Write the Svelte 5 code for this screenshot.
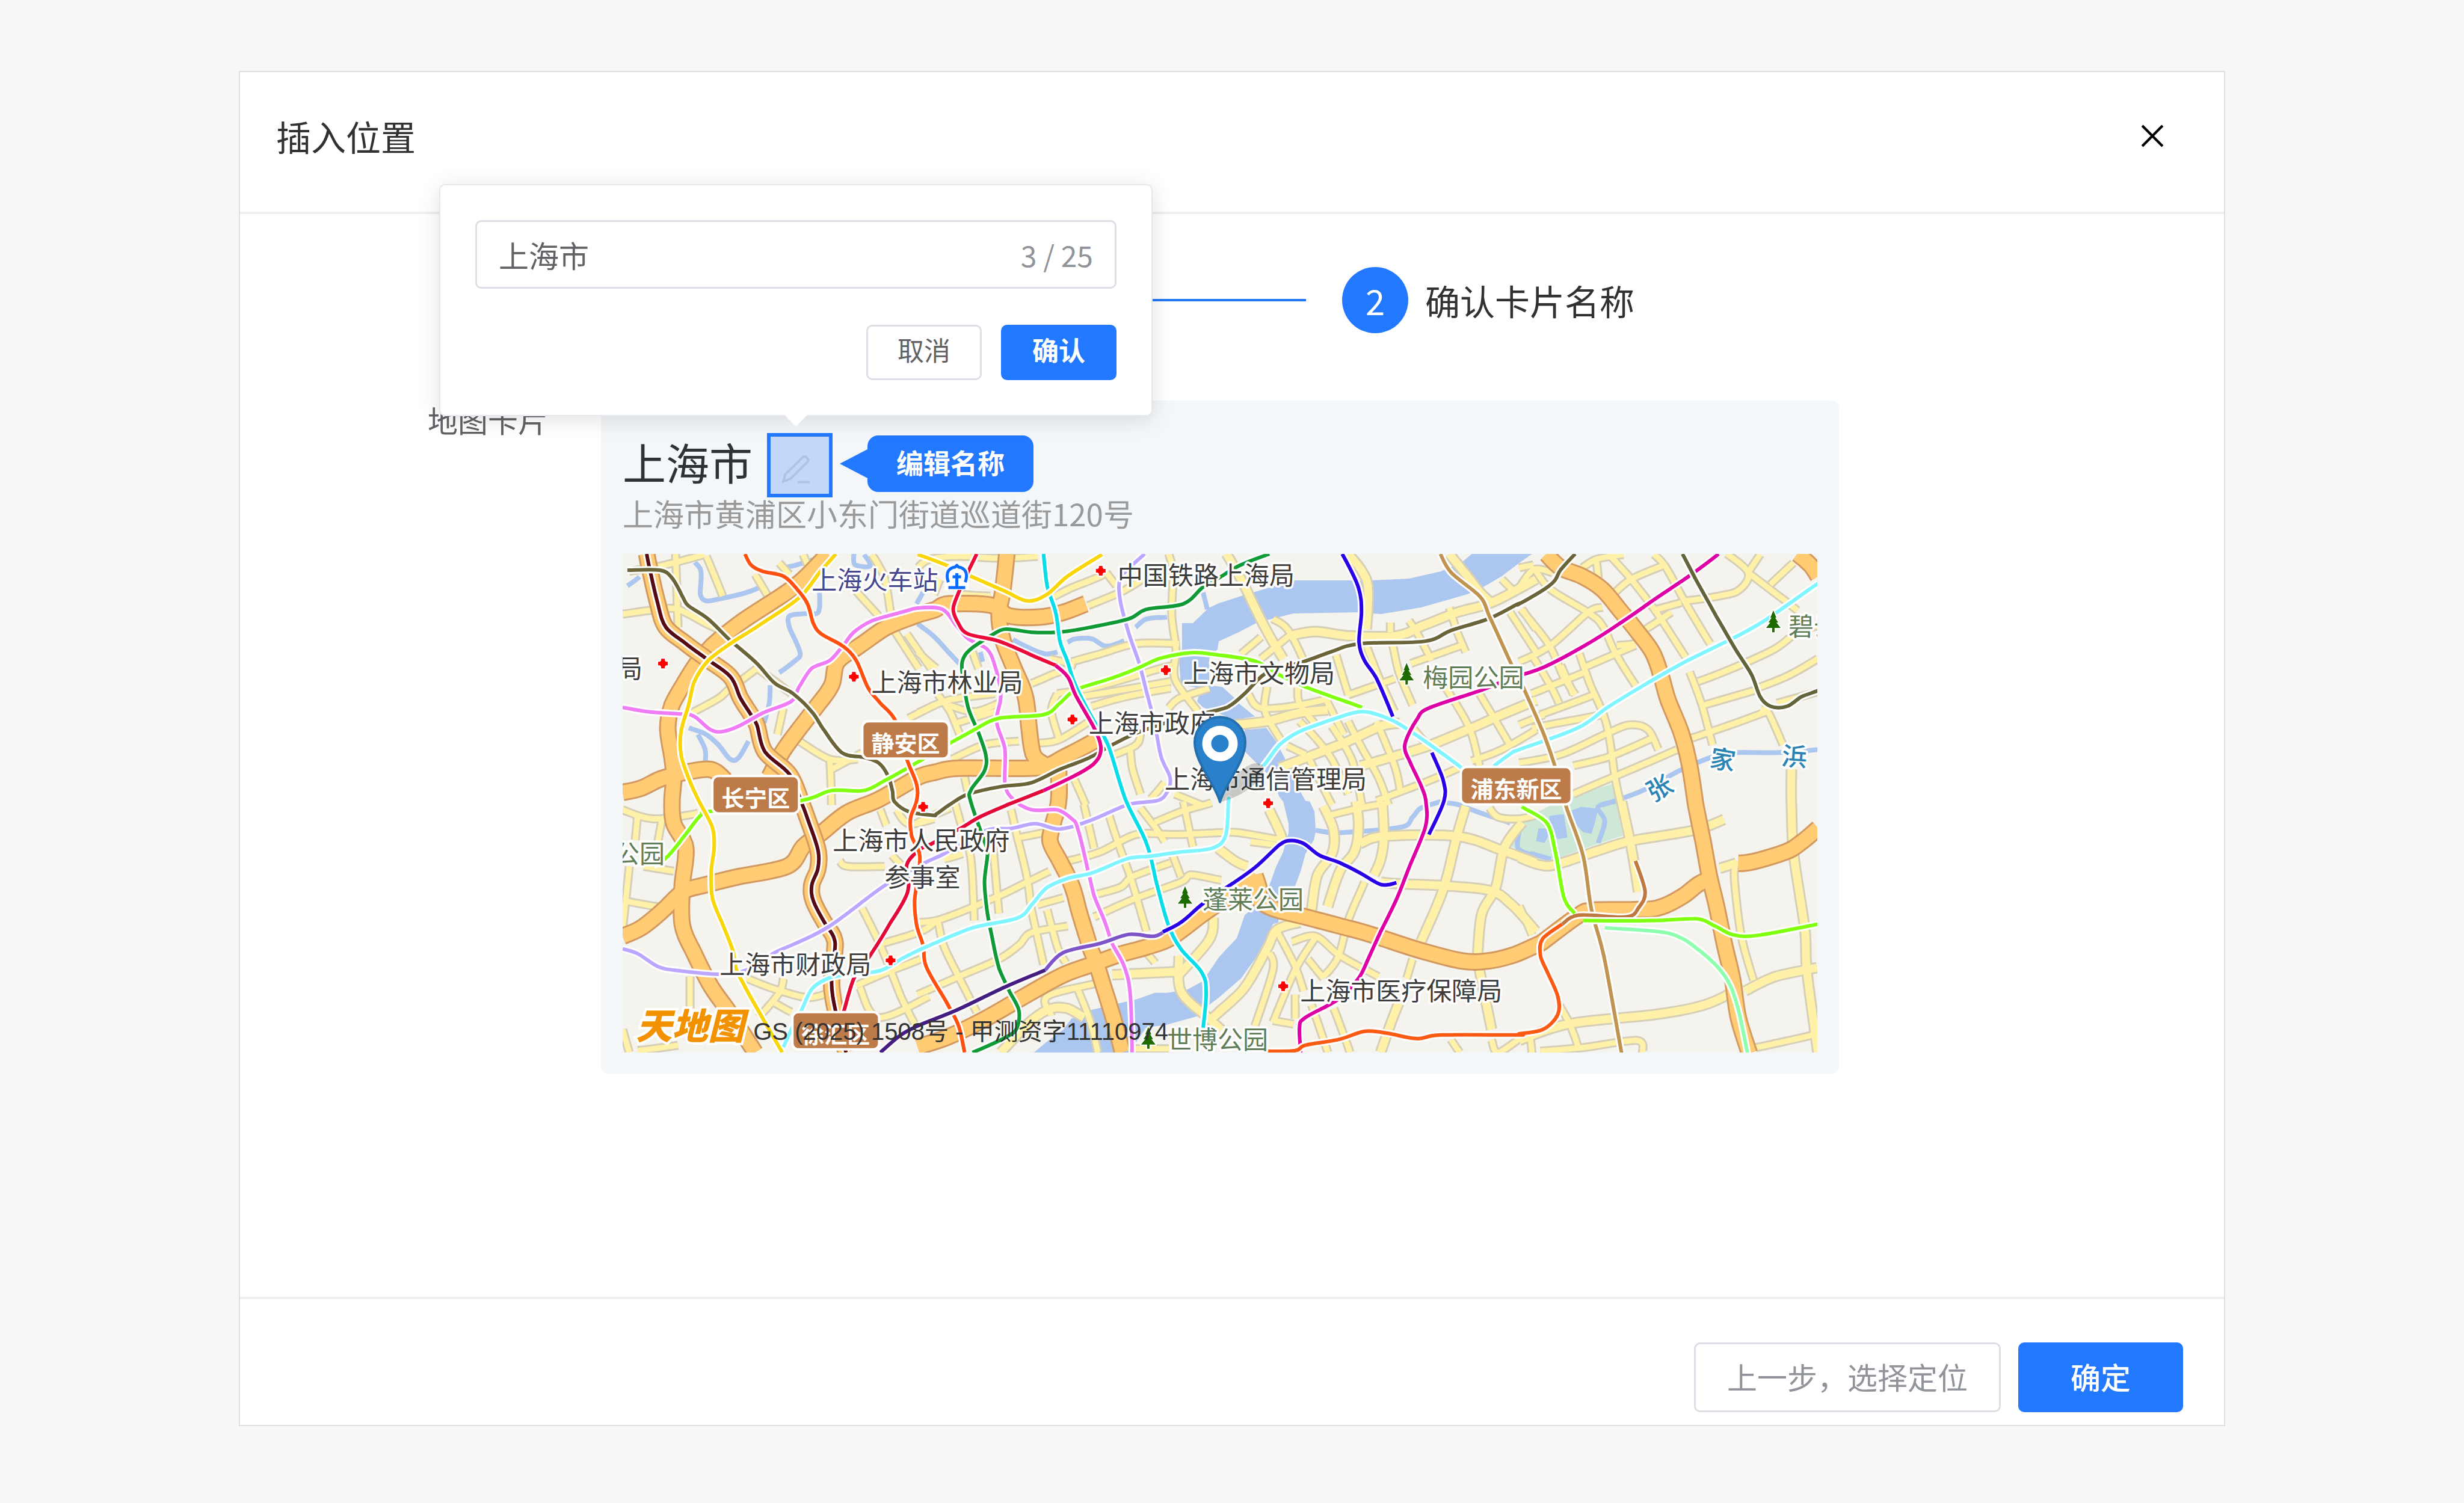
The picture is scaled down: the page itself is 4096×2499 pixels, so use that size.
<script>
  let name = $state('上海市');
  const limit = 25;

  // The map is digitised on eight sheets. Each has an origin on the map and a
  // step per sheet unit; points() turns "a 10,20 30,40 b 5,6" into map units.
  const sheets = {
    a: [-9, -12.5, 0.3361, 0.2742],
    b: [490.3, -12.5, 0.3361, 0.2742],
    c: [989.7, -12.5, 0.3361, 0.2742],
    d: [1489, -12.5, 0.345, 0.2742],
    e: [-9, 410.5, 0.3361, 0.2919],
    f: [490.3, 410.5, 0.3361, 0.2919],
    g: [989.7, 410.5, 0.3361, 0.2919],
    h: [1489, 410.5, 0.3538, 0.3008]
  };

  function points(route) {
    let sheet = sheets.a;
    const out = [];
    for (const token of route.split(/\s+/)) {
      if (sheets[token]) {
        sheet = sheets[token];
        continue;
      }
      const [x, y] = token.split(',').map(Number);
      out.push([Math.round(sheet[0] + x * sheet[2]), Math.round(sheet[1] + y * sheet[3])]);
    }
    return out;
  }

  function at(route) {
    const [[x, y]] = points(route);
    return { x, y };
  }

  // A smooth curve through all the points of a route
  function curve(route) {
    const p = points(route);
    let d = `M${p[0]}`;
    for (let i = 0; i < p.length - 1; i++) {
      const p0 = p[i - 1] ?? p[i];
      const p1 = p[i];
      const p2 = p[i + 1];
      const p3 = p[i + 2] ?? p2;
      const c1 = [0, 1].map((k) => Math.round(p1[k] + (p2[k] - p0[k]) / 6));
      const c2 = [0, 1].map((k) => Math.round(p2[k] - (p3[k] - p1[k]) / 6));
      d += `C${c1} ${c2} ${p2}`;
    }
    return d;
  }

  const area = (route) => `M${points(route).join('L')}Z`;

  const river = area(
    'c 1250,46 1210,90 1100,150 940,195 750,205 370,205 250,250 110,300 0,345 b 1435,375 1360,465 1305,465 1305,620 1290,680 1300,840 1400,860 1380,940 1410,975 1480,1010 c 60,1040 130,1110 130,1240 200,1330 260,1400 300,1520 g 320,0 345,130 345,180 320,290 285,375 250,480 180,600 130,650 90,780 0,890 f 1440,970 1400,1030 1330,1075 1230,1090 1170,1090 1080,1130 1000,1150 850,1190 850,1230 760,1235 720,1300 640,1370 570,1432 840,1432 1040,1432 1130,1285 1220,1275 1380,1225 1440,1160 g 0,1120 110,1010 180,900 250,750 270,700 295,690 295,620 370,510 405,400 430,300 470,220 480,170 475,60 450,0 c 430,1540 360,1390 345,1330 285,1180 235,1100 150,1110 120,1040 180,1030 100,950 80,920 20,850 b 1440,840 1440,680 1480,620 c 0,575 100,520 190,460 370,405 690,400 800,412 1000,370 1230,290 1320,240 1400,180 d 0,100 60,46'
  );
  const park = area(
    'd 250,1510 450,1440 470,1540 h 485,190 330,250 170,320 60,300 0,270 g 1430,250 1490,150 h 20,100 150,20'
  );
  const ponds = [
    area('h 140,80 210,70 225,200 180,210 150,160 120,230 80,220 90,150 140,150'),
    area('h 245,50 290,30 370,40 360,100 340,180 300,170 260,120')
  ];

  const streams = [
    'a 50,240 110,185', 'a 385,95 415,150 410,290 440,330 500,320 620,285 700,250', 'a 840,125 920,100 1000,65',
    'a 1000,280 1000,370 985,405 930,405 850,420 850,490 880,570 905,650 880,690 800,765',
    'a 1170,46 1175,110 1250,120 1220,50', 'a 1510,280 1480,350', 'a 1485,470 1568,550 b 150,640 205,710',
    'a 755,840 750,960 725,1070', 'a 355,1100 440,1140 500,1200 560,1290 600,1280 650,1180',
    'a 400,1140 435,1230 435,1320', 'b 470,565 560,620 630,650 690,640', 'b 740,580 780,560 860,560 930,605 1020,570',
    'b 1075,490 1130,440 1230,430', 'b 1410,280 1430,380', 'b 310,640 320,700',
    'g 480,165 600,180 900,150 960,90 1000,40 1100,0', 'g 1100,10 1180,20 1300,70 1440,125',
    'd 400,1568 600,1475 770,1360 930,1275 1040,1250 1250,1250 1437,1230',
    'g 1490,150 1480,270 1568,310 h 60,290 150,320', 'h 450,0 370,30 400,110 370,230'
  ];

  const minor = [
    'a 27,410 190,385 300,380 440,470 530,520', 'a 290,46 300,490', 'a 60,150 240,110 430,50', 'a 440,60 520,300',
    'a 680,170 760,330', 'a 800,100 850,170', 'a 920,50 940,110', 'a 1260,50 1320,190 1350,400', 'a 1180,270 1290,420',
    'a 1370,510 1490,740', 'a 1430,530 1550,740', 'a 370,1010 500,920 560,860 690,740', 'a 690,740 860,890',
    'a 820,980 790,1140', 'a 900,1180 1050,1290 1190,1290', 'a 1050,1290 1060,1568', 'a 1060,1350 1210,1250',
    'a 1440,1040 1568,960', 'b 0,130 60,80 210,60 400,70 590,60', 'b 80,290 110,200', 'b 200,290 360,300',
    'b 660,310 760,250 900,180 930,150', 'b 840,360 1000,280 1110,200', 'b 930,160 980,240',
    'b 1240,46 1260,160 1255,420 1275,620 1270,800 1370,980 1385,1000', 'b 0,640 90,740', 'b 270,640 300,740',
    'b 560,830 660,780 760,720 650,680', 'b 760,700 900,650 1080,590 1290,590', 'b 690,890 660,1000 700,1180',
    'b 690,890 880,850 1200,740 1270,720', 'b 800,910 900,890 1250,820', 'b 860,970 1030,910 1250,860',
    'b 0,1010 150,930 380,890', 'b 100,900 160,1000 210,1150', 'b 150,960 280,1000 400,950', 'b 190,1070 380,1000',
    'b 600,1190 700,1170 870,1040', 'b 170,1290 330,1200 500,1180', 'b 1240,980 1290,920 1440,860',
    'b 950,1270 1080,1200 1100,1130', 'b 1050,1230 1060,1350 1100,1500', 'b 1220,1430 1150,1530', 'b 770,1400 830,1568',
    'b 230,1400 250,1500', 'b 1270,1500 1400,1568', 'c 270,440 340,500 420,690', 'c 110,650 210,550', 'c 210,680 350,540',
    'c 850,460 850,520', 'c 940,450 990,540 1050,690', 'c 1140,370 1180,520 1220,640', 'c 860,600 890,760 960,960',
    'c 730,600 800,820 870,1000', 'c 580,660 640,900', 'c 950,710 1200,600', 'c 640,900 870,800', 'c 1400,200 1460,270',
    'c 150,900 210,980 400,960 550,920', 'c 240,850 230,1000 310,1180', 'c 390,850 400,950 480,1080', 'c 520,900 620,1140',
    'c 640,1060 700,1200 790,1400 840,1568', 'c 340,1210 430,1260', 'c 480,1160 560,1290 640,1500',
    'c 560,1090 660,1300 710,1568', 'c 780,1060 870,1330 900,1490', 'c 780,1540 1000,1440 1190,1340',
    'c 960,1100 1030,1200', 'c 1120,850 1240,1100 1290,1330', 'c 1290,890 1380,1080 1440,1210', 'c 1440,400 1568,640',
    'c 1500,380 1568,500', 'c 1250,1300 1400,1230 1568,1110', 'c 400,1060 480,1160', 'c 440,1270 560,1568',
    'd 0,250 70,140 160,160', 'd 70,130 150,260 330,400 400,480 460,640 560,840', 'd 10,380 140,590 210,780 270,900',
    'd 0,700 150,600 330,400 400,370', 'd 300,130 370,80 500,50', 'd 370,90 380,190', 'd 430,46 540,200 660,400 800,670',
    'd 650,50 700,120 800,340 920,590', 'd 460,280 540,200 700,110', 'd 800,330 960,300 1060,260 1100,160 1000,46',
    'd 1100,160 1160,50', 'd 1100,160 1270,320 1340,390', 'd 1210,230 1320,100', 'd 640,390 780,340', 'd 600,510 730,400',
    'd 470,600 560,590', 'd 300,740 560,600', 'd 290,650 340,830 400,1000 430,1130 460,1400 490,1568',
    'd 60,660 130,800 190,950', 'd 200,720 260,900', 'd 60,890 320,760', 'd 100,1020 360,900', 'd 0,1080 120,1020',
    'd 0,1310 200,1260 430,1130 530,1080 620,1110 670,1230', 'd 260,1330 440,1270 640,1160',
    'd 260,1500 450,1400 760,1230', 'd 820,760 880,970 930,1200', 'd 860,820 1060,720 1230,620 1340,520 1437,480',
    'd 890,960 1140,870', 'd 1160,850 1300,780 1437,680', 'd 830,1160 1000,1090 1190,1000', 'd 1160,990 1200,1010 1270,1200',
    'd 1240,950 1437,880', 'd 0,130 70,110', 'd 60,1100 400,1020', 'e 27,50 180,100 400,70', 'e 100,80 90,220',
    'e 220,110 200,240', 'e 60,370 40,600 27,720', 'e 50,570 200,600', 'e 130,370 280,400', 'e 360,1000 360,1180',
    'e 640,1010 780,1070 940,1120 1050,1090', 'e 820,1010 800,1090 700,1230', 'e 780,1150 860,1200',
    'e 1100,340 1140,370 1320,370', 'e 1300,50 1330,140', 'e 1380,50 1440,130 1568,100', 'e 1210,610 1300,820 1400,1110 1470,1270',
    'e 1310,810 1500,740 1568,690', 'e 1180,1050 1340,970 1500,900', 'e 1200,1060 1290,1230 1540,1110', 'e 1360,310 1400,360',
    'e 27,1300 60,1430', 'e 100,1420 300,1390', 'f 180,0 210,120 260,320 280,680', 'f 370,260 400,640',
    'f 460,50 490,200 540,440 560,620 620,930', 'f 480,210 620,180', 'f 130,330 220,300', 'f 10,690 120,670 380,550 540,460 650,400',
    'f 100,690 130,830 200,1000 290,1200', 'f 0,1100 200,1000 400,900 500,820 560,750 740,710', 'f 590,590 720,550',
    'f 640,620 690,830 730,920', 'f 740,340 900,290 1080,190 1270,190 1485,180 g 100,180 300,220', 'f 820,20 870,270',
    'f 940,60 1000,270 1060,470 1130,740', 'f 1100,40 1160,130 1220,230', 'f 1170,120 1300,60 1450,10', 'f 1310,0 1360,260',
    'f 850,540 1000,490 1060,430 1250,350', 'f 870,660 1060,560 1300,460 1350,420 1500,450', 'f 1260,310 1300,430',
    'f 1130,860 1170,920', 'f 660,1220 640,1110 870,1040', 'f 790,1070 850,1250 890,1430',
    'f 1060,1410 1240,1410', 'f 0,120 160,40', 'g 160,230 280,250', 'g 550,80 700,40 800,20',
    'g 960,900 930,1010', 'g 1340,40 1380,90 1480,100 1568,80', 'g 720,460 640,680 590,890 520,1000',
    'g 290,740 380,940 420,1080', 'g 250,860 270,960 180,1280', 'g 490,760 380,960 270,1260',
    'g 360,800 480,770 600,880 790,1000', 'g 440,900 520,1010', 'g 270,1250 370,1270', 'g 380,1100 380,1240',
    'g 460,1160 540,1430', 'g 570,1180 650,1430', 'g 1150,1360 1190,1430', 'g 1350,1360 1380,1430 1500,1340',
    'h 1020,330 1010,400 1020,560 1050,780 1100,990', 'h 0,580 60,740', 'h 190,1130 240,1240 280,1370',
    'h 50,1300 60,1390', 'h 100,1380 300,1360 550,1320 580,1390', 'h 1110,1360 1380,1290'
  ];

  const middle = [
    'c 40,46 110,200 180,370 260,560 320,680', 'c 640,46 710,150 740,260 730,500',
    'c 350,540 480,515 640,540 880,540 1010,480 1180,400 1330,350 1450,280 1568,200', 'c 1140,46 1230,180 1300,290 1350,340',
    'c 80,1080 240,1060 400,1010 540,990', 'c 300,1340 450,1270 620,1190 800,1090 900,1070',
    'c 700,1330 850,1280 1050,1200 1230,1110 1400,1020 1568,930', 'd 1310,1350 1310,1568 h 1290,300 1340,700 1350,950 1401,1390',
    'f 960,990 1270,970', 'f 1290,880 1300,1080 1440,1240 1500,1300', 'f 1450,1240 1568,1120', 'f 1460,660 1440,790 1290,990',
    'f 410,1430 560,1250 660,1180 740,1180 820,1230', 'f 1485,270 1568,340 g 140,370', 'g 250,50 310,200 290,220',
    'g 520,30 570,170 560,300 490,420 460,620', 'g 680,0 690,150 670,290 600,400 540,600', 'g 810,0 815,200 800,330 770,420',
    'g 700,240 815,200 1180,200 1400,280 1568,350', 'g 1220,30 1170,230 1110,500 1000,800',
    'g 800,460 900,470 1110,480 1340,510 1450,590 1568,740', 'g 1500,120 1410,270 1370,490 1300,640 1280,870',
    'g 890,1150 840,1300 800,1430', 'g 1290,960 1350,1300', 'g 0,1200 130,1060 240,840 290,730 400,690',
    'h 480,0 520,220 560,500', 'h 0,310 90,350 170,350 350,280 520,220 820,160 960,100', 'h 940,370 1020,340',
    'h 1060,1050 1200,970 1400,920', 'h 0,1320 240,1230 640,1180 860,1130 980,1070'
  ];

  const major = [
    'a 1040,46 900,220 760,340 600,470 470,600 400,700 330,830 270,960 250,1100 270,1280 280,1400 e 270,0 280,130 340,270 320,480 320,700 380,870 460,1050 560,1210 680,1430',
    'a 27,1490 120,1465 220,1405 330,1370 460,1350 540,1420',
    'e 27,770 120,720 230,620 320,520 420,480 600,430 840,370 920,260 1000,190 1130,70 1290,-10 b 0,1400 80,1370 200,1345 550,1345 640,1330 730,1270 890,1170',
    'a 750,1400 830,1220 980,980 1060,840 1090,700 1200,600 1330,490 1470,420 1568,385 b 150,350 360,355 450,420 600,430 720,400 830,350',
    'b 440,46 420,280 400,400 420,560 470,720 530,900 550,1100 570,1260 620,1320',
    'b 695,1350 695,1540 f 670,130 655,230 700,340 760,480 800,640 850,830 880,920 930,1100 980,1300 1010,1430',
    'f 0,1400 150,1340 300,1260 500,1130 700,1000 860,930 980,880 1130,830 1250,780 1400,650 g 30,560 160,460 190,440',
    'g 180,420 200,500 200,560 270,610 430,660 600,710 750,760 1000,850 1200,910 1330,910 1450,880 1568,820 h 120,770 270,635 340,605 540,600 650,590 760,530 840,460 890,430',
    'd 130,46 200,130 300,180 400,260 480,380 560,500 640,640 680,780 720,940 780,1130 820,1330 850,1568 h 860,200 890,400 930,600 960,780 1000,980 1030,1200 1080,1390',
    'd 1340,46 1400,110 1437,180',
    'h 1030,345 1100,335 1250,280 1320,230 1401,150'
  ];

  const railway =
    'a 147,46 168,170 200,340 240,490 340,590 440,680 560,790 610,920 660,1020 690,1080 730,1240 850,1380 e 910,10 950,130 995,290 990,390 960,480 970,570 1030,700 1070,780 1075,860 1060,1030 1080,1200 1130,1430';

  const lines = [
    ['#bda6ff', 'b 1120,46 1060,110 1000,200 1000,320 1040,520 1090,700 1130,880 1170,1080 1200,1270 1245,1400 1230,1490 1180,1540 f 1040,20 850,110 700,160 580,130 460,155 330,170 130,300 30,355 e 1320,480 1050,710 880,810 780,860 640,960 500,985 300,965 200,940 100,870 27,840'],
    ['#ef7cf5', 'a 27,975 150,1000 320,1015 380,1030 460,1110 520,1120 600,1090 720,1010 860,940 900,850 960,740 1050,690 1110,610 1170,520 1260,450 1400,400 1485,375 b 120,380 190,480 250,560 340,620 380,720 410,900 390,1060 430,1230 430,1440 470,1530 f 560,50 690,50 760,100 790,160 840,400 870,540 920,680 960,810 1020,940 1050,1100 1058,1430'],
    ['#6b6438', 'a 50,145 210,145 270,190 320,300 350,360 450,440 560,570 690,710 780,830 870,890 960,1000 1020,1110 1110,1250 1220,1280 1290,1310 1340,1390 1360,1480 e 1370,0 1440,60 1560,80 f 90,75 b 155,1568 250,1500 420,1455 560,1430 700,1350 850,1280 960,1200 1100,1120 1300,1040 c 0,990 60,960 130,890 220,780 300,740 430,695 560,635 700,590 1020,575 1150,510 1330,440 1480,350 d 0,350 150,230 200,140 270,46'],
    ['#0f9a35', 'c 250,46 100,120 0,190 b 1410,245 1310,350 1130,380 1040,440 850,490 690,520 560,520 430,500 360,540 260,620 220,700 225,820 250,980 300,1130 335,1260 330,1360 265,1470 f 260,0 330,230 345,300 330,460 340,620 370,800 400,950 450,1080 500,1190 490,1290 440,1340 270,1430'],
    ['#80ff0f', 'e 180,365 240,325 330,200 410,85 470,55 a 905,1540 1060,1480 1220,1480 1330,1415 1500,1295 b 160,1190 280,1110 400,1040 620,1020 700,950 780,870 950,800 1090,735 1200,675 1350,645 c 0,660 180,695 300,780 430,850 710,975'],
    ['#0bdde8', 'b 620,46 640,240 680,400 700,570 740,700 780,840 870,1060 940,1200 1030,1540 f 1130,240 1180,470 1240,710 1300,840 1400,970 1425,1080 1410,1290'],
    ['#f8d60a', 'a 1080,46 1000,160 900,310 700,480 560,590 450,690 380,820 350,970 315,1120 315,1260 350,1400 e 405,0 470,150 480,260 465,400 470,550 520,700 570,850 590,960 620,1030 720,1240 815,1430'],
    ['#f8d60a', 'b 0,50 150,120 260,180 430,270 540,330 640,290 740,180 910,50'],
    ['#ec0a3a', 'b 290,46 250,150 200,280 175,380 200,470 250,530 400,575 560,660 680,720'],
    ['#e30a3a', 'b 620,1480 440,1568 f 300,95 205,160 70,240 e 1490,280 1430,360 1440,480 1420,560 1350,690 1250,880 1170,1010 1120,1200'],
    ['#e5008c', 'b 680,720 740,790 780,900 870,1100 905,1210 890,1290 820,1360 620,1480'],
    ['#ff500f', 'a 632,46 660,110 720,150 820,180 890,260 940,350 970,470 1010,530 1110,600 1180,690 1240,860 1300,950 1375,1055 1430,1290 1480,1440 e 1480,0 1450,100 1455,200 1495,300 1490,400 1470,560 1480,700 1510,820 f 40,940 140,1140 200,1280 230,1430'],
    ['#80f5ff', 'e 820,1400 870,1280 910,1190 960,1070 1040,1010 1130,990 1300,965 1420,890 f 60,820 270,720 490,665 560,590 640,490 740,440 860,410 1030,330 1150,315 1300,290 1450,270 1520,200 1535,0 c 50,1540'],
    ['#80f5ff', 'c 150,1430 220,1330 300,1200 400,1120 560,1050 710,1000 850,1050 960,1130 1200,1340'],
    ['#80f5ff', 'c 1360,1330 1450,1250 d 0,1230 280,1100 420,980 600,840 800,700 1000,575 1180,450 1437,225'],
    ['#2a00e6', 'c 610,46 690,250 705,400 695,580 720,690 780,800 860,1030'],
    ['#2a00e6', 'c 1055,1250 1110,1420 1115,1540 g 1040,190'],
    ['#2a00e6', 'g 880,465 800,475 700,410 600,350 500,310 420,240 360,225 300,250 180,380 40,490 f 1400,590 1300,690 1210,745'],
    ['#7d55c8', 'f 1210,750 1160,768 1040,760 900,810 720,860 630,960'],
    ['#451c80', 'f 630,960 440,1055 190,1190 0,1280 e 1400,1330 1300,1430'],
    ['#c09350', 'c 1095,46 1150,160 1290,300 1340,430 1440,700 d 30,880 120,1140 170,1330 h 220,30 300,300 340,600 400,880 480,1390'],
    ['#dd00a5', 'd 960,46 830,170 640,330 480,470 300,610 120,730 30,770 c 1380,830 1300,870 1040,980 980,1050 920,1200 950,1320 1000,1450 g 1025,0 1020,150 940,380 880,560 800,740 740,900 690,1010 590,1130 430,1230 400,1290 405,1430'],
    ['#63643a', 'd 785,46 850,200 950,430 1050,640 1120,780 1160,910 1210,970 1290,970 1360,910 1437,875'],
    ['#bf7840', 'h 200,680 280,630 500,640 560,590 590,500 545,330'],
    ['#fa5a12', 'g 240,1425 380,1420 430,1390 600,1355 720,1310 830,1320 980,1350 1100,1330 1480,1330 h 0,1285 110,1260 180,1180 180,1080 130,940 100,850 110,760 200,680'],
    ['#80ff0f', 'h 10,30 130,120 170,280 210,530 260,620'],
    ['#80ff0f', 'h 300,660 620,660 830,650 920,690 1010,740 1130,740 1401,680'],
    ['#8dffae', 'h 400,700 700,730 850,830 960,960 1020,1120 1070,1390']
  ];

  const dots = [
    'a 225,709', 'a 1169,788', 'b 904,146', 'b 1225,750', 'b 765,1050', 'e 1511,32', 'c 244,1555', 'e 1350,905', 'g 319,1055'
  ].map(at);

  const trees = ['c 930,705', 'd 1222,388', 'f 1321,485', 'f 1140,1288'].map(at);

  const places = [
    ['station', '上海火车站', 'a 960,262'],
    ['office', '局', 'a 0,796'],
    ['office', '上海市林业局', 'a 1256,879'],
    ['office', '中国铁路上海局', 'b 986,233'],
    ['office', '上海市文物局', 'b 1312,826'],
    ['office', '上海市政府', 'b 844,1128'],
    ['office', '上海市通信管理局', 'b 1220,1468'],
    ['office', '上海市人民政府', 'e 1066,280'],
    ['office', '参事室', 'e 1320,486'],
    ['office', '上海市财政局', 'e 505,983'],
    ['office', '上海市医疗保障局', 'g 404,1131'],
    ['garden', '梅园公园', 'c 1010,851'],
    ['garden', '碧云', 'd 1297,540'],
    ['garden', '公园', 'e -15,351'],
    ['garden', '蓬莱公园', 'f 1405,613'],
    ['garden', '世博公园', 'f 1232,1411']
  ].map(([kind, text, route]) => ({ kind, text, ...at(route) }));

  const creek = [
    ['张', 'd 675,1463', -30],
    ['家', 'd 980,1293', 10],
    ['浜', 'd 1325,1275', 4]
  ].map(([text, route, turn]) => ({ text, turn, ...at(route) }));

  const districts = [
    ['静安区', 'a 1218,1068', 140],
    ['长宁区', 'a 477,1400', 140],
    ['浦东新区', 'c 1202,1345', 180],
    ['徐汇区', 'e 873,1208', 140]
  ].map(([text, route, width]) => ({ text, width, ...at(route) }));

  const station = at('b 192,110');
  const pin = at('b 1492,1030');
</script>

<main class="page">
  <div class="dialog" role="dialog" aria-labelledby="dialog-title">
    <header class="head">
      <h1 id="dialog-title">插入位置</h1>
      <button class="close" type="button" aria-label="关闭">
        <svg viewBox="0 0 36 36"><path d="M2 2 34 34M34 2 2 34" /></svg>
      </button>
    </header>

    <div class="body">
      <div class="steps">
        <span class="track"></span>
        <span class="step">
          <b class="number">2</b>
          <span class="step-name">确认卡片名称</span>
        </span>
      </div>

      <div class="row">
        <span class="row-name">地图卡片</span>
        <section class="card">
          <div class="card-head">
            <h2>{name}</h2>
            <div class="edit">
              <button class="pencil" type="button" aria-label="编辑名称">
                <svg viewBox="0 0 52 50"><path d="M3 46 7 33 37 4Q40 1 43 4L45 6Q48 9 45 12L16 41ZM28 47H49" /></svg>
              </button>
              <span class="hint">编辑名称</span>

              <form class="popover" onsubmit={(event) => event.preventDefault()}>
                <div class="field">
                  <input aria-label="名称" maxlength={limit} bind:value={name} />
                  <span class="count">{name.length} / {limit}</span>
                </div>
                <div class="choices">
                  <button class="small" type="button">取消</button>
                  <button class="small primary" type="submit">确认</button>
                </div>
              </form>
            </div>
          </div>
          <p class="address">上海市黄浦区小东门街道巡道街120号</p>

          <svg class="map" viewBox="0 0 1984 828" role="img" aria-label="上海市地图">
            <rect class="land" width="1984" height="828" />
            <path class="park" d={park} />
            <path class="water" d={river} />
            {#each ponds as pond}<path class="water" d={pond} />{/each}
            {#each streams as route}<path class="stream" d={curve(route)} />{/each}

            {#each minor as route}<path class="minor edge" d={curve(route)} />{/each}
            {#each middle as route}<path class="middle edge" d={curve(route)} />{/each}
            {#each minor as route}<path class="minor" d={curve(route)} />{/each}
            {#each middle as route}<path class="middle" d={curve(route)} />{/each}
            {#each major as route}<path class="major edge" d={curve(route)} />{/each}
            {#each major as route}<path class="major" d={curve(route)} />{/each}

            <path class="major edge" d={curve(railway)} />
            <path class="major" d={curve(railway)} />
            <path class="halo" d={curve(railway)} />
            <path class="line" stroke="#550a14" d={curve(railway)} />

            {#each lines as [color, route]}
              <path class="halo" d={curve(route)} />
              <path class="line" stroke={color} d={curve(route)} />
            {/each}

            {#each dots as dot}
              <path class="dot" transform="translate({dot.x} {dot.y})" d="M-3-8H3V-5L5-3H8V3H5L3 5V8H-3V5L-5 3H-8V-3H-5L-3-5Z" />
            {/each}
            {#each trees as tree}
              <path
                class="tree"
                transform="translate({tree.x} {tree.y})"
                d="M0 0 5 12H3L8 20H5L12 29H2V36H-2V29H-12L-5 20H-8L-3 12H-5Z"
              />
            {/each}

            {#each places as place}
              <text class={place.kind} x={place.x} y={place.y}>{place.text}</text>
            {/each}
            {#each creek as word}
              <text class="creek" transform="translate({word.x} {word.y}) rotate({word.turn})" y="15">{word.text}</text>
            {/each}
            {#each districts as district}
              <rect class="badge" x={district.x} y={district.y} width={district.width} height="58" rx="8" />
              <text class="district" x={district.x + district.width / 2} y={district.y + 49}>{district.text}</text>
            {/each}

            <g class="station-mark" transform="translate({station.x} {station.y})">
              <path class="station-back" d="M-20 42V14Q-18-4 0-4T20 14V42Z" />
              <path d="M-14 29C-20 12-12 5-3 4L0 1 3 4C12 5 20 12 14 29" />
              <path d="M0 14V37M-14 38H14M-7 20H7" />
            </g>

            <g transform="translate({pin.x} {pin.y})">
              <path class="pin-shade" d="M2 142Q20 90 56 78 84 76 66 104 44 130 2 142Z" />
              <path class="pin" d="M0 142C-9 110-42 76-42 43A42 42 0 0 1 42 43C42 76 9 110 0 142Z" />
              <circle class="pin-eye" cy="45" r="22" />
            </g>

            <text class="brand" x="22" y="806">天地图</text>
            <text class="licence" x="217" y="807">GS (2025) 1508号 - 甲测资字11110974</text>
          </svg>
        </section>
      </div>
    </div>

    <footer class="foot">
      <button class="large" type="button">上一步，选择定位</button>
      <button class="large primary" type="button">确定</button>
    </footer>
  </div>
</main>

<style>
  :global(body) {
    margin: 0;
    background: #f7f7f7;
  }

  .page {
    box-sizing: border-box;
    min-height: 100vh;
    padding: 118px 397px 128px;
    display: flex;
    font-family: 'Noto Sans CJK SC', sans-serif;
    font-size: 50px;
    color: #606266;
  }

  h1,
  h2,
  p {
    margin: 0;
    font-weight: 400;
  }

  button,
  input {
    box-sizing: border-box;
    padding: 0;
    font: inherit;
    color: inherit;
  }

  .dialog {
    flex: 1;
    display: flex;
    flex-direction: column;
    background: #fff;
    border: 2px solid #e0e0e0;
  }

  .head {
    display: flex;
    align-items: center;
    justify-content: space-between;
    padding: 68px 100px 88px 60px;
    border-bottom: 4px solid #efefef;
  }

  h1 {
    font-size: 58px;
    line-height: 76px;
    color: #303133;
  }

  .close {
    display: flex;
    background: none;
    border: 0;
  }

  .close svg {
    width: 38px;
    fill: none;
    stroke: #000;
    stroke-width: 4;
  }

  .body {
    flex: 1;
    padding: 88px 640px 60px 0;
  }

  .steps {
    display: flex;
    align-items: center;
    gap: 60px;
    margin-left: 1412px;
  }

  .track {
    width: 360px;
    height: 4px;
    background: #2277f0;
  }

  .step {
    display: flex;
    align-items: center;
    gap: 28px;
  }

  .number {
    width: 110px;
    line-height: 110px;
    border-radius: 50%;
    background: #2279ff;
    color: #fff;
    font-size: 58px;
    font-weight: 400;
    text-align: center;
  }

  .step-name {
    font-size: 58px;
    line-height: 110px;
    color: #303133;
  }

  .row {
    display: grid;
    grid-template-columns: 512px 1fr;
    column-gap: 88px;
    margin-top: 112px;
  }

  .row-name {
    text-align: right;
    line-height: 62px;
  }

  .card {
    padding: 54px 36px 35px;
    border-radius: 12px;
    background: #f4f7fa;
  }

  .card-head {
    display: flex;
    align-items: center;
    gap: 24px;
  }

  h2 {
    font-size: 72px;
    line-height: 93px;
    padding-bottom: 14px;
    color: #303133;
  }

  .edit {
    position: relative;
    display: flex;
    align-items: center;
    gap: 58px;
  }

  .pencil {
    width: 109px;
    height: 107px;
    display: flex;
    padding-left: 18px;
    padding-top: 14px;
    background: #c2d7f9;
    border: 6px solid #2279ff;
  }

  .pencil svg {
    width: 50px;
    fill: none;
    stroke: #adc3e6;
    stroke-width: 4;
  }

  .hint {
    position: relative;
    margin-bottom: 6px;
    padding: 0 48px 4px;
    border-radius: 18px;
    background: #2279ff;
    color: #fff;
    font-size: 45px;
    font-weight: 700;
    line-height: 90px;
  }

  .hint::before {
    content: '';
    position: absolute;
    right: 100%;
    top: 23px;
    border: 24px solid transparent;
    border-right: 46px solid #2279ff;
    border-left: 0;
  }

  .popover {
    position: absolute;
    bottom: calc(100% + 28px);
    left: -545px;
    width: 1186px;
    box-sizing: border-box;
    padding: 58px;
    display: grid;
    gap: 60px;
    background: #fff;
    border: 2px solid #e4e7ed;
    border-radius: 10px;
    box-shadow: 0 6px 36px rgb(0 0 0 / 12%);
  }

  .popover::after {
    content: '';
    position: absolute;
    left: 572px;
    top: 100%;
    border: 19px solid transparent;
    border-top-color: #fff;
    border-bottom: 0;
  }

  .field {
    display: flex;
    align-items: center;
    height: 108px;
    padding: 0 36px;
    border: 3px solid #dcdfe6;
    border-radius: 10px;
  }

  .field input {
    flex: 1;
    min-width: 0;
    border: 0;
    outline: 0;
    background: none;
  }

  .count {
    font-size: 48px;
    color: #909399;
  }

  .choices {
    display: flex;
    justify-content: flex-end;
    gap: 32px;
  }

  .small {
    width: 192px;
    height: 92px;
    padding-bottom: 10px;
    font-size: 44px;
    line-height: 76px;
  }

  .small,
  .large {
    background: #fff;
    border: 3px solid #dcdfe6;
    border-radius: 10px;
  }

  .small.primary,
  .large.primary {
    background: #2279ff;
    border-color: #2279ff;
    color: #fff;
    font-weight: 500;
  }

  .small.primary {
    font-weight: 700;
  }

  .address {
    font-size: 51px;
    line-height: 52px;
    color: #999;
  }

  .map {
    display: block;
    width: 100%;
    margin-top: 42px;
  }

  .foot {
    display: flex;
    justify-content: flex-end;
    gap: 29px;
    padding: 72px 68px 21px;
    border-top: 4px solid #efefef;
  }

  .large {
    height: 116px;
    padding: 0 52px 4px;
    color: #909399;
  }

  .large.primary {
    padding: 0 84px 4px;
  }

  .map path {
    fill: none;
    stroke-linecap: butt;
    stroke-linejoin: round;
  }

  .land {
    fill: #f5f3ee;
  }

  .map .park {
    fill: #cde8d7;
  }

  .map .water {
    fill: #abc6ef;
  }

  .stream {
    stroke: #abc6ef;
    stroke-width: 8px;
  }

  .minor {
    stroke: #fff1a8;
    stroke-width: 9px;
  }

  .minor.edge {
    stroke: #d6cfb8;
    stroke-width: 15px;
  }

  .middle {
    stroke: #fff1a8;
    stroke-width: 13px;
  }

  .middle.edge {
    stroke: #d6cfb8;
    stroke-width: 19px;
  }

  .major {
    stroke: #ffcb73;
    stroke-width: 23px;
  }

  .major.edge {
    stroke: #d29a60;
    stroke-width: 29px;
  }

  .halo {
    stroke: #fff;
    stroke-width: 12px;
  }

  .line {
    stroke-width: 6px;
  }

  .map .dot {
    fill: #f00;
    stroke: #fff;
    stroke-width: 5px;
    paint-order: stroke;
  }

  .map .tree {
    fill: #1d6b00;
    stroke: #fff;
    stroke-width: 4px;
    paint-order: stroke;
  }

  .office,
  .garden,
  .station,
  .creek {
    font-size: 42px;
    fill: #3c3c3c;
    stroke: #fff;
    stroke-width: 7px;
    stroke-linejoin: round;
    paint-order: stroke;
  }

  .garden {
    fill: #607d58;
  }

  .station {
    fill: #46468f;
  }

  .creek {
    fill: #2a84b4;
    text-anchor: middle;
    font-weight: 500;
  }

  .badge {
    fill: #bd7b49;
    stroke: #fff;
    stroke-width: 8px;
    paint-order: stroke;
  }

  .district {
    font-size: 38px;
    font-weight: 700;
    fill: #fff;
    text-anchor: middle;
  }

  .station-mark path {
    stroke: #0a6cff;
    stroke-width: 5px;
  }

  .station-mark .station-back {
    fill: #fff;
    stroke: none;
  }

  .map .pin {
    fill: #2a81cb;
    stroke: #2470af;
    stroke-width: 4px;
  }

  .map .pin-shade {
    fill: rgb(0 0 0 / 18%);
  }

  .pin-eye {
    fill: #2a81cb;
    stroke: #fff;
    stroke-width: 15px;
  }

  .brand {
    font-size: 60px;
    font-weight: 900;
    font-style: italic;
    fill: #f39200;
    stroke: #fff;
    stroke-width: 8px;
    paint-order: stroke;
  }

  .licence {
    font-family: 'Liberation Sans', 'Noto Sans CJK SC', sans-serif;
    font-size: 40px;
    fill: #333;
  }
</style>
